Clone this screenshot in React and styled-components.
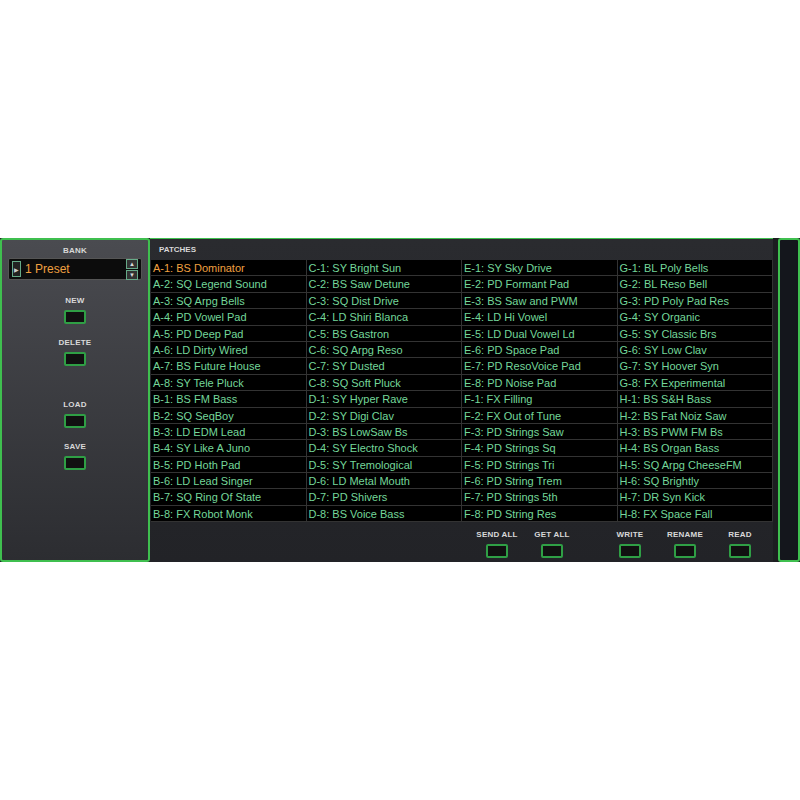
import React from "react";
import styled, { createGlobalStyle } from "styled-components";

const G = createGlobalStyle`
  body{margin:0;background:#fff;font-family:"Liberation Sans",Arial,sans-serif;}
`;
const Page = styled.div`padding-top:238px;height:800px;box-sizing:border-box;`;
const Rack = styled.div`display:flex;height:324px;background:#1c1d20;`;
const Side = styled.div`
  flex:0 0 150px;box-sizing:border-box;border:2px solid #3fbf4f;border-radius:3px;
  background:linear-gradient(180deg,#4a4b50,#2c2d31);display:flex;flex-direction:column;align-items:center;padding:6px 4px;
`;
const Label = styled.div`color:#d8d8d8;font-size:8px;font-weight:bold;letter-spacing:.2px;white-space:nowrap;`;
const Preset = styled.div`
  margin-top:3px;width:134px;height:22px;background:#0c0c0c;border:1px solid #555;border-radius:2px;display:flex;align-items:center;gap:4px;padding:0 3px;box-sizing:border-box;
`;
const Arrow = styled.div`width:7px;height:14px;border:1px solid #6a8;background:#222;color:#ccc;font-size:6px;display:flex;align-items:center;justify-content:center;`;
const PresetText = styled.div`flex:1;color:#f0a040;font-size:12px;`;
const Steps = styled.div`display:flex;flex-direction:column;gap:1px;`;
const Step = styled.div`width:10px;height:8px;background:#333;border:1px solid #6a8;color:#ddd;font-size:6px;line-height:8px;text-align:center;`;
const Btn = styled.div`display:flex;flex-direction:column;align-items:center;gap:5px;margin-top:${p=>p.$mt}px;`;
const Key = styled.div`width:18px;height:10px;border:2px solid #2f9f45;border-radius:2px;background:#111;`;
const Main = styled.div`flex:1;display:flex;flex-direction:column;border-top:1px solid #3fbf4f;background:linear-gradient(180deg,#2a2b2f,#222327);`;
const Head = styled.div`height:21px;display:flex;align-items:center;padding-left:9px;color:#d8d8d8;font-size:8px;font-weight:bold;`;
const Grid = styled.div`margin-left:1px;width:622px;display:grid;grid-template-columns:repeat(4,1fr);grid-auto-flow:column;grid-template-rows:repeat(16,16.4px);background:#000;`;
const Cell = styled.div`
  color:${p=>p.$sel?"#f0a040":"#74d79a"};font-size:11px;line-height:16px;padding-left:2px;white-space:nowrap;overflow:hidden;
  border-bottom:1px solid #333;border-right:1px solid #333;box-sizing:border-box;
`;
const Foot = styled.div`flex:1;display:flex;padding-left:322px;align-items:flex-start;padding-top:8px;`;
const FBtn = styled.div`width:50px;margin-left:${p=>p.$ml}px;display:flex;flex-direction:column;align-items:center;gap:5px;`;
const Scroll = styled.div`flex:0 0 22px;box-sizing:border-box;border:2px solid #3fbf4f;border-radius:3px;background:#14161c;margin-left:5px;`;

const cols = {
A:["BS Dominator","SQ Legend Sound","SQ Arpg Bells","PD Vowel Pad","PD Deep Pad","LD Dirty Wired","BS Future House","SY Tele Pluck"],
B:["BS FM Bass","SQ SeqBoy","LD EDM Lead","SY Like A Juno","PD Hoth Pad","LD Lead Singer","SQ Ring Of State","FX Robot Monk"],
C:["SY Bright Sun","BS Saw Detune","SQ Dist Drive","LD Shiri Blanca","BS Gastron","SQ Arpg Reso","SY Dusted","SQ Soft Pluck"],
D:["SY Hyper Rave","SY Digi Clav","BS LowSaw Bs","SY Electro Shock","SY Tremological","LD Metal Mouth","PD Shivers","BS Voice Bass"],
E:["SY Sky Drive","PD Formant Pad","BS Saw and PWM","LD Hi Vowel","LD Dual Vowel Ld","PD Space Pad","PD ResoVoice Pad","PD Noise Pad"],
F:["FX Filling","FX Out of Tune","PD Strings Saw","PD Strings Sq","PD Strings Tri","PD String Trem","PD Strings 5th","PD String Res"],
G:["BL Poly Bells","BL Reso Bell","PD Poly Pad Res","SY Organic","SY Classic Brs","SY Low Clav","SY Hoover Syn","FX Experimental"],
H:["BS S&H Bass","BS Fat Noiz Saw","BS PWM FM Bs","BS Organ Bass","SQ Arpg CheeseFM","SQ Brightly","DR Syn Kick","FX Space Fall"],
};

export default function App(){
  const cells=[];
  Object.entries(cols).forEach(([k,v])=>v.forEach((n,i)=>cells.push(
    <Cell key={k+i} $sel={k==="A"&&i===0}>{`${k}-${i+1}: ${n}`}</Cell>)));
  const fb=[["SEND ALL",0],["GET ALL",5],["WRITE",28],["RENAME",5],["READ",5]];
  return <Page><G/>
    <Rack>
      <Side>
        <Label>BANK</Label>
        <Preset><Arrow>▶</Arrow><PresetText>1 Preset</PresetText><Steps><Step>▲</Step><Step>▼</Step></Steps></Preset>
        <Btn $mt={16}><Label>NEW</Label><Key/></Btn>
        <Btn $mt={14}><Label>DELETE</Label><Key/></Btn>
        <Btn $mt={34}><Label>LOAD</Label><Key/></Btn>
        <Btn $mt={14}><Label>SAVE</Label><Key/></Btn>
      </Side>
      <Main>
        <Head>PATCHES</Head>
        <Grid>{cells}</Grid>
        <Foot>{fb.map(([t,ml])=><FBtn key={t} $ml={ml}><Label>{t}</Label><Key/></FBtn>)}</Foot>
      </Main>
      <Scroll/>
    </Rack>
  </Page>;
}
